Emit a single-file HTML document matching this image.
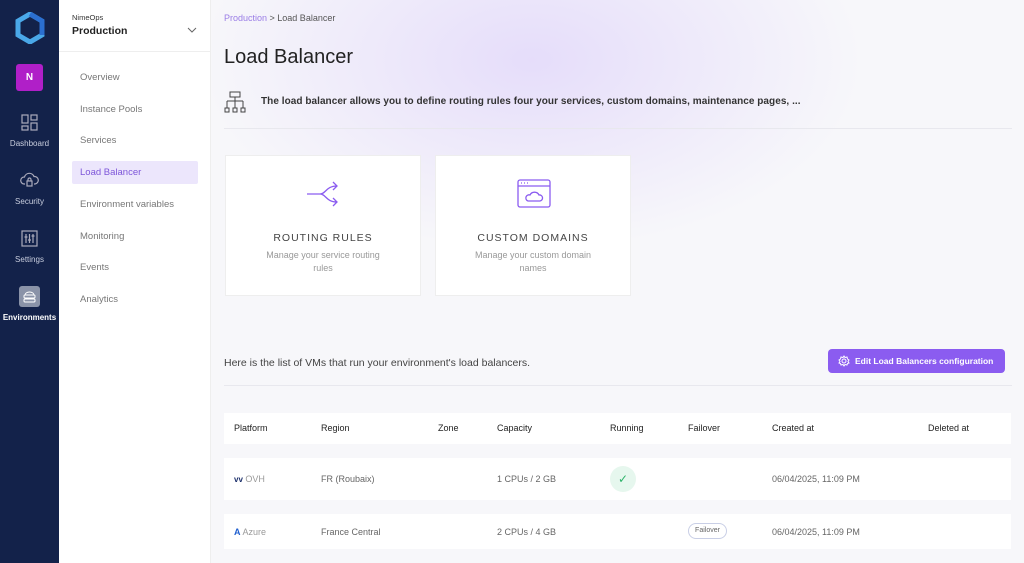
<!DOCTYPE html>
<html><head><meta charset="utf-8"><style>
*{margin:0;padding:0;box-sizing:border-box}
body{width:1024px;height:563px;overflow:hidden;font-family:"Liberation Sans",sans-serif;background:#f7f7fa;position:relative;color:#333}
.rail{position:absolute;left:0;top:0;width:59px;height:563px;background:#13224a}
.rail .it{position:absolute;left:0;width:59px;text-align:center;color:#c9cede;font-size:8px}
.side{position:absolute;left:59px;top:0;width:152px;height:563px;background:#fff;border-right:1px solid #eee}
.side .nav{position:absolute;left:21px;font-size:9.5px;color:#777}
.main{position:absolute;left:212px;top:0;right:0;bottom:0;background:radial-gradient(ellipse 330px 190px at 320px 60px,rgba(222,210,250,.7),rgba(247,247,250,0) 100%)}
.card{position:absolute;top:155px;width:196px;height:141px;background:#fff;border:1px solid #eee;text-align:center}
.card h3{position:absolute;top:76px;width:100%;font-weight:normal;font-size:10.5px;letter-spacing:1px;color:#444}
.card p{position:absolute;top:93px;left:34px;right:34px;font-size:9px;color:#999;line-height:13px}
.row{position:absolute;left:224px;width:787px;background:#fff}
.c{position:absolute;font-size:9px;color:#666}
.h{color:#222}
</style></head><body>
<div class="rail">
<svg style="position:absolute;left:15px;top:12px" width="30" height="32" viewBox="0 0 30 32"><path d="M15 2 L27 9 V23 L15 30 L3 23 V9 Z" fill="none" stroke="#4aa8e8" stroke-width="5"/><path d="M15 2 L27 9 V23" fill="none" stroke="#2b6fd0" stroke-width="5"/></svg>
<div style="position:absolute;left:16px;top:64px;width:27px;height:27px;background:#b01fc8;border-radius:3px;color:#fff;font-size:10px;font-weight:bold;text-align:center;line-height:27px">N</div>
<svg style="position:absolute;left:21px;top:114px" width="17" height="17" viewBox="0 0 17 17" fill="none" stroke="#aab" stroke-width="1.2"><rect x="1" y="1" width="6" height="8"/><rect x="10" y="1" width="6" height="5"/><rect x="1" y="12" width="6" height="4"/><rect x="10" y="9" width="6" height="7"/></svg>
<div class="it" style="top:139px">Dashboard</div>
<svg style="position:absolute;left:20px;top:172px" width="19" height="17" viewBox="0 0 19 17" fill="none" stroke="#aab" stroke-width="1.2"><path d="M5 12 H4 A3.5 3.5 0 0 1 4.5 5 A5 5 0 0 1 14 4.5 A3.5 3.5 0 0 1 15 12 H14"/><rect x="7" y="9" width="5" height="5"/><path d="M8 9 V7.5 A1.5 1.5 0 0 1 11 7.5 V9"/></svg>
<div class="it" style="top:197px">Security</div>
<svg style="position:absolute;left:21px;top:230px" width="17" height="17" viewBox="0 0 17 17" fill="none" stroke="#aab" stroke-width="1.2"><rect x="1" y="1" width="15" height="15"/><path d="M5 4V13M8.5 4V13M12 4V13"/><path d="M3.5 7h3M7 10h3M10.5 6h3"/></svg>
<div class="it" style="top:255px">Settings</div>
<div style="position:absolute;left:19px;top:286px;width:21px;height:21px;background:#8a93a8;border-radius:3px"></div>
<svg style="position:absolute;left:22px;top:289px" width="15" height="15" viewBox="0 0 15 15" fill="none" stroke="#fff" stroke-width="1"><path d="M3 6 A4.5 3 0 0 1 12 6"/><rect x="2" y="6" width="11" height="3" rx="1"/><rect x="2" y="10" width="11" height="3" rx="1"/></svg>
<div class="it" style="top:313px;color:#fff;font-weight:bold">Environments</div>
</div>
<div class="side">
<div style="position:absolute;left:13px;top:13px;font-size:7.5px;color:#333">NimeOps</div>
<div style="position:absolute;left:13px;top:25px;font-size:10.5px;font-weight:bold;color:#222">Production</div>
<svg style="position:absolute;left:128px;top:27px" width="10" height="6" viewBox="0 0 10 6"><path d="M1 1 L5 5 L9 1" fill="none" stroke="#666" stroke-width="1"/></svg>
<div style="position:absolute;left:0;top:51px;width:151px;height:1px;background:#eee"></div>
<div class="nav" style="top:72px">Overview</div>
<div class="nav" style="top:104px">Instance Pools</div>
<div class="nav" style="top:135px">Services</div>
<div style="position:absolute;left:13px;top:161px;width:126px;height:23px;background:#ece6fc;border-radius:2px"></div>
<div class="nav" style="top:167px;color:#7d55d9">Load Balancer</div>
<div class="nav" style="top:199px">Environment variables</div>
<div class="nav" style="top:231px">Monitoring</div>
<div class="nav" style="top:262px">Events</div>
<div class="nav" style="top:294px">Analytics</div>
</div>
<div class="main">
<div style="position:absolute;left:12px;top:13px;font-size:9px;color:#555"><span style="color:#9a7de6">Production</span> &gt; Load Balancer</div>
<div style="position:absolute;left:12px;top:46px;font-size:20px;color:#222">Load Balancer</div>
<svg style="position:absolute;left:12px;top:91px" width="22" height="23" viewBox="0 0 22 23" fill="none" stroke="#444" stroke-width="1"><rect x="6" y="1" width="10" height="5"/><path d="M11 6V10M3 10H19M3 10V17M11 10V17M19 10V17"/><rect x="1" y="17" width="4" height="4"/><rect x="9" y="17" width="4" height="4"/><rect x="17" y="17" width="4" height="4"/></svg>
<div style="position:absolute;left:49px;top:96px;font-size:10px;font-weight:bold;color:#333;letter-spacing:0.05px">The load balancer allows you to define routing rules four your services, custom domains, maintenance pages, ...</div>
<div style="position:absolute;left:12px;top:128px;width:788px;height:1px;background:#e8e8ee"></div>
<div style="position:absolute;left:12px;top:357px;font-size:10.5px;color:#444">Here is the list of VMs that run your environment's load balancers.</div>
<div style="position:absolute;left:616px;top:349px;width:177px;height:24px;background:#8b5cf0;border-radius:4px;color:#fff;font-size:8.5px;font-weight:bold;line-height:24px;padding-left:27px">Edit Load Balancers configuration</div>
<svg style="position:absolute;left:626px;top:355px" width="12" height="12" viewBox="0 0 12 12" fill="none" stroke="#fff" stroke-width="1"><circle cx="6" cy="6" r="2"/><path d="M6 1 L7 2.5 L9 2 L9.5 4 L11 5 L10 6.5 L11 8 L9.5 8.5 L9 10 L7 9.5 L6 11 L5 9.5 L3 10 L2.5 8.5 L1 8 L2 6.5 L1 5 L2.5 4 L3 2 L5 2.5 Z"/></svg>
<div style="position:absolute;left:12px;top:385px;width:788px;height:1px;background:#e8e8ee"></div>
</div>
<div class="card" style="left:225px">
<svg style="position:absolute;left:80px;top:24px" width="36" height="28" viewBox="0 0 36 28" fill="none" stroke="#8b5cf0" stroke-width="1.3"><path d="M1 14 H14 C20 14 20 6 31 6 M14 14 C20 14 20 22 31 22 M27 2 L31 6 L27 10 M27 18 L31 22 L27 26"/></svg>
<h3>ROUTING RULES</h3><p>Manage your service routing rules</p></div>
<div class="card" style="left:435px">
<svg style="position:absolute;left:81px;top:23px" width="34" height="30" viewBox="0 0 34 30" fill="none" stroke="#8b5cf0" stroke-width="1.3"><rect x="1" y="1" width="32" height="27" rx="2"/><path d="M1 7 H33"/><path d="M4 4h1M7 4h1M10 4h1"/><path d="M11 22 H23 A3 3 0 0 0 22 16 A5 5 0 0 0 13 16 A3 3 0 0 0 11 22 Z"/></svg>
<h3>CUSTOM DOMAINS</h3><p>Manage your custom domain names</p></div>
<div class="row" style="top:413px;height:31px"></div>
<div class="c h" style="left:234px;top:423px">Platform</div><div class="c h" style="left:321px;top:423px">Region</div><div class="c h" style="left:438px;top:423px">Zone</div><div class="c h" style="left:497px;top:423px">Capacity</div><div class="c h" style="left:610px;top:423px">Running</div><div class="c h" style="left:688px;top:423px">Failover</div><div class="c h" style="left:772px;top:423px">Created at</div><div class="c h" style="left:928px;top:423px">Deleted at</div>
<div class="row" style="top:458px;height:42px"></div>
<div class="c" style="left:234px;top:474px;color:#999"><b style="color:#1c2f6b;font-size:8px">vv</b> OVH</div><div class="c" style="left:321px;top:474px">FR (Roubaix)</div><div class="c" style="left:497px;top:474px">1 CPUs / 2 GB</div>
<div style="position:absolute;left:610px;top:466px;width:26px;height:26px;border-radius:50%;background:#e6f7ee;color:#2db36a;text-align:center;line-height:26px;font-size:12px">✓</div>
<div class="c" style="left:772px;top:474px">06/04/2025, 11:09 PM</div>
<div class="row" style="top:514px;height:35px"></div>
<div class="c" style="left:234px;top:527px;color:#999"><b style="color:#1f5fcf">A</b> Azure</div><div class="c" style="left:321px;top:527px">France Central</div><div class="c" style="left:497px;top:527px">2 CPUs / 4 GB</div>
<div style="position:absolute;left:688px;top:523px;width:39px;height:16px;border:1px solid #c9cfe6;border-radius:8px;font-size:7px;color:#666;text-align:center;line-height:14px">Failover</div>
<div class="c" style="left:772px;top:527px">06/04/2025, 11:09 PM</div>
</body></html>
